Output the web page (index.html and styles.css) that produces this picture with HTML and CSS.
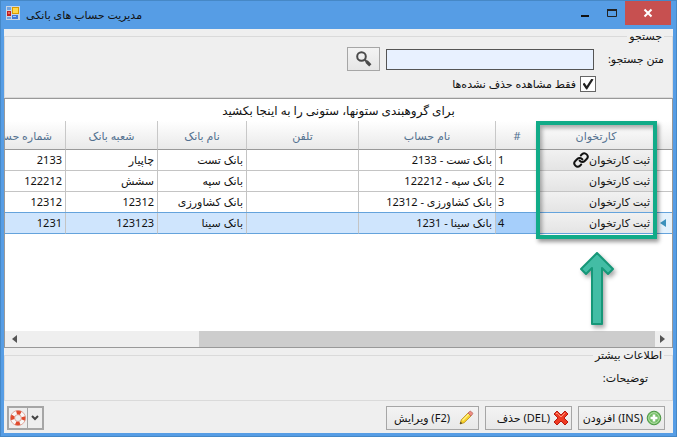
FILE: index.html
```html
<!DOCTYPE html>
<html lang="fa">
<head>
<meta charset="utf-8">
<title>مدیریت حساب های بانکی</title>
<link rel="stylesheet" href="styles.css">
</head>
<body>
<div class="window">
  <header class="titlebar">
    <svg class="app-icon" width="14" height="14" viewBox="0 0 14 14" aria-hidden="true">
      <rect width="14" height="14" fill="#c9d6e6"/>
      <rect x="1" y="1" width="4" height="3" fill="#6fa3e0"/>
      <rect x="1" y="5" width="4" height="5" fill="#c21f1f"/>
      <rect x="2" y="6" width="2" height="2" fill="#e86a5a"/>
      <rect x="1" y="11" width="4" height="2" fill="#6fa3e0"/>
      <rect x="6" y="1" width="7" height="7" fill="#d99a00"/>
      <rect x="7" y="2" width="5" height="5" fill="#ffd84a"/>
      <rect x="6" y="9" width="6" height="4" fill="#3f78d8"/>
      <rect x="7" y="10" width="3" height="1" fill="#a9c8f5"/>
    </svg>
    <h1 class="title">مدیریت حساب های بانکی</h1>
    <div class="window-buttons">
      <button class="win-btn" type="button" aria-label="کوچک کردن"><svg width="10" height="10" viewBox="0 0 10 10"><path d="M1 8h8" stroke="#111" stroke-width="2"/></svg></button>
      <button class="win-btn" type="button" aria-label="بزرگ کردن"><svg width="10" height="10" viewBox="0 0 10 10"><path d="M.5 1.500v7h9v-7z" fill="none" stroke="#222"/><path d="M0 2h10" stroke="#222" stroke-width="2"/></svg></button>
      <button class="win-btn close" type="button" aria-label="بستن"><svg width="10" height="10" viewBox="0 0 10 10"><path d="M1.500 1.500l7 7M8.500 1.500l-7 7" stroke="#fff" stroke-width="2"/></svg></button>
    </div>
  </header>

  <main class="form" dir="rtl">
    <fieldset class="group search">
      <legend>جستجو</legend>
      <div class="search-row">
        <label class="search-label" for="q">متن جستجو:</label>
        <input class="search-input" id="q" type="text">
        <button class="search-btn" type="button" aria-label="جستجو">
          <svg width="16" height="16" viewBox="0 0 16 16"><circle cx="5.500" cy="5.500" r="4.300" fill="none" stroke="#4a4a4a" stroke-width="2"/><path d="M8.800 8.800l2 2" stroke="#4a4a4a" stroke-width="2"/><path d="M10.500 10.500l3.800 3.800" stroke="#4a4a4a" stroke-width="3.200"/></svg>
        </button>
      </div>
      <div class="check-row">
        <input class="check" id="active" type="checkbox" checked>
        <label for="active">فقط مشاهده حذف نشده‌ها</label>
      </div>
    </fieldset>

    <section class="grid">
      <p class="group-hint">برای گروهبندی ستونها، ستونی را به اینجا بکشید</p>
      <table class="accounts">
        <colgroup><col class="c-mark"><col class="c-reader"><col class="c-num"><col class="c-name"><col class="c-phone"><col class="c-bank"><col class="c-branch"><col class="c-account"></colgroup>
        <thead>
          <tr><th></th><th>کارتخوان</th><th>#</th><th>نام حساب</th><th>تلفن</th><th>نام بانک</th><th>شعبه بانک</th><th>شماره حساب</th></tr>
        </thead>
        <tbody>
          <tr><td></td><td class="action"><button type="button">ثبت کارتخوان
            <svg width="16" height="16" viewBox="0 0 24 24" fill="none" stroke="#111" stroke-width="3" stroke-linecap="round" stroke-linejoin="round" aria-hidden="true"><path d="M10 13a5 5 0 0 0 7.540.54l3-3a5 5 0 0 0-7.070-7.070l-1.720 1.710"/><path d="M14 11a5 5 0 0 0-7.540-.54l-3 3a5 5 0 0 0 7.070 7.070l1.710-1.710"/></svg></button></td><td class="num">1</td><td>بانک تست - 2133</td><td></td><td>بانک تست</td><td>چاپیار</td><td>2133</td></tr>
          <tr><td></td><td class="action"><button type="button">ثبت کارتخوان</button></td><td class="num">2</td><td>بانک سپه - 122212</td><td></td><td>بانک سپه</td><td>سشش</td><td>122212</td></tr>
          <tr><td></td><td class="action"><button type="button">ثبت کارتخوان</button></td><td class="num">3</td><td>بانک کشاورزی - 12312</td><td></td><td>بانک کشاورزی</td><td>12312</td><td>12312</td></tr>
          <tr class="selected"><td class="marker"><svg width="6" height="8" viewBox="0 0 6 8" aria-hidden="true"><path d="M6 0v8L0 4z" fill="#3c92bd"/></svg></td><td class="action"><button type="button">ثبت کارتخوان</button></td><td class="num current">4</td><td>بانک سینا - 1231</td><td></td><td>بانک سینا</td><td>123123</td><td>1231</td></tr>
        </tbody>
      </table>
      <div class="scrollbar">
        <svg width="5" height="8" viewBox="0 0 5 8" aria-hidden="true"><path d="M0 0v8l5-4z" fill="#555"/></svg>
        <div class="track"><div class="thumb"></div></div>
        <svg width="5" height="8" viewBox="0 0 5 8" aria-hidden="true"><path d="M5 0v8L0 4z" fill="#555"/></svg>
      </div>
      <div class="highlight"></div>
      <svg class="arrow" width="36" height="76" viewBox="0 0 36 76" aria-hidden="true"><path d="M18 2L34 18l-5 5-6-6v56h-10V17l-6 6-5-5z" fill="#43bda5" stroke="#169778" stroke-width="2" stroke-linejoin="round"/></svg>
    </section>

    <fieldset class="group details">
      <legend>اطلاعات بیشتر</legend>
      <p>توضیحات:</p>
    </fieldset>

    <footer class="actions">
      <button class="cmd" type="button">
        <svg width="16" height="16" viewBox="0 0 16 16" aria-hidden="true"><circle cx="8" cy="8" r="6.800" fill="#73bd65" stroke="#4c9744"/><circle cx="8" cy="8" r="5.300" fill="none" stroke="#b5dfaa"/><path d="M8 4.500v7M4.500 8h7" stroke="#fff" stroke-width="2.600"/></svg>
        <span>(INS) افزودن</span>
      </button>
      <button class="cmd" type="button">
        <svg width="16" height="16" viewBox="0 0 16 16" aria-hidden="true"><path d="M4 1L8 5l4-4 3 3-4 4 4 4-3 3-4-4-4 4-3-3 4-4-4-4z" fill="#ee3a22" stroke="#b81a10" stroke-linejoin="round"/><path d="M3 4l1-1.200L8 7l4-4.200" fill="none" stroke="#ff9a80"/></svg>
        <span>(DEL) حذف</span>
      </button>
      <button class="cmd wide" type="button">
        <svg width="16" height="16" viewBox="0 0 16 16" aria-hidden="true"><path d="M2 14l1.300-4.200L10 3l3 3-6.800 6.700z" fill="#f7d32c" stroke="#b98a18" stroke-width=".8"/><path d="M4.500 10.500L11 4" stroke="#fff08a" stroke-width="1.200"/><path d="M10 3l1.600-1.500q.8-.6 1.600.1l1.200 1.200q.7.800 0 1.500L13 6z" fill="#ef8d82" stroke="#b8645c" stroke-width=".8"/><path d="M2 14l.7-2.200 1.500 1.500z" fill="#333"/></svg>
        <span>(F2) ویرایش</span>
      </button>
      <div class="help" dir="ltr">
        <button type="button" aria-label="راهنما"><svg width="16" height="16" viewBox="0 0 16 16"><circle cx="8" cy="8" r="5.500" fill="none" stroke="#f8f8f8" stroke-width="4"/><circle cx="8" cy="8" r="5.500" fill="none" stroke="#e24a2c" stroke-width="4" stroke-dasharray="4.320 4.320" stroke-dashoffset="2.160"/><circle cx="8" cy="8" r="7.500" fill="none" stroke="#d98a7a" stroke-width=".7"/><circle cx="8" cy="8" r="3.400" fill="none" stroke="#d98a7a" stroke-width=".7"/></svg></button>
        <button type="button" aria-label="گزینه‌ها"><svg width="8" height="6" viewBox="0 0 8 6"><path d="M1 1l3 3 3-3" fill="none" stroke="#444" stroke-width="2"/></svg></button>
      </div>
    </footer>
  </main>
</div>
</body>
</html>
```

FILE: styles.css
```css
* { box-sizing: border-box; }

body {
  margin: 0;
  font: 11px/14px "Noto Sans", "DejaVu Sans", sans-serif;
  color: #111;
}

button, input { font: inherit; color: inherit; margin: 0; padding: 0; }
p { margin: 0; }
svg { display: block; flex: none; }

.window {
  display: flex;
  flex-direction: column;
  min-height: 100vh;
  padding: 0 3px 3px;
  border: 1px solid #4688c6;
  background: #569de5;
}

.titlebar {
  display: flex;
  align-items: center;
  height: 28px;
  padding-left: 2px;
}
.app-icon { margin-bottom: 4px; }
.title {
  flex: 1;
  margin: 0 6px;
  font-size: 11px;
  font-weight: 400;
}
.window-buttons { display: flex; align-self: flex-start; margin-right: 2px; }
.win-btn {
  display: flex;
  align-items: center;
  justify-content: center;
  width: 27px;
  height: 24px;
  border: 0;
  background: none;
}
.win-btn.close { width: 46px; background: #c75050; }

.form {
  flex: 1;
  display: flex;
  flex-direction: column;
  background: #efefef;
}

.group {
  min-width: 0;
  margin: 0;
  padding: 4px 8px 5px;
  border: 1px solid #dadada;
}
.group legend { margin: 0; padding: 0 2px; }

.search-row, .check-row { display: flex; align-items: center; }
.search-label { width: 70px; }
.search-input {
  width: 208px;
  height: 21px;
  border: 1px solid #555;
  background: #e8f1ff;
}
.search-btn {
  display: flex;
  align-items: center;
  justify-content: center;
  width: 33px;
  height: 24px;
  margin-right: 6px;
  border: 1px solid #a6a6a6;
  background: linear-gradient(#f3f3f3, #e6e6e6);
}
.check-row { gap: 4px; margin-top: 5px; padding-right: 68px; }
.check {
  appearance: none;
  width: 16px;
  height: 16px;
  border: 1px solid #666;
  background: #fff;
  display: grid;
  place-items: center;
}
.check:checked::before {
  content: "";
  width: 11px;
  height: 11px;
  background: #222;
  clip-path: polygon(0 50%, 18% 38%, 38% 68%, 82% 0, 100% 8%, 42% 100%, 34% 100%);
}

.grid {
  position: relative;
  flex: 1;
  display: flex;
  flex-direction: column;
  overflow: hidden;
  border: 1px solid #999;
  background: #fff;
}
.group-hint { padding: 5px 0 3px; font-size: 12px; text-align: center; }

.accounts {
  width: 697px;
  flex: none;
  table-layout: fixed;
  border-collapse: separate;
  border-spacing: 0;
}
.c-mark { width: 19px; }
.c-reader { width: 115px; }
.c-num { width: 43px; }
.c-name { width: 137px; }
.c-phone { width: 112px; }
.c-bank { width: 89px; }
.c-branch { width: 92px; }
.c-account { width: 90px; }

.accounts th {
  height: 29px;
  padding: 2px 0 0;
  border-left: 1px solid #c8c8c8;
  border-bottom: 1px solid #999;
  background: linear-gradient(#fff, #e9e9e9);
  color: #52708f;
  font-weight: 400;
  white-space: nowrap;
}
.accounts td {
  height: 21px;
  padding: 0 3px;
  border-left: 1px solid #c4c4c4;
  border-bottom: 1px solid #c4c4c4;
  text-align: right;
  white-space: nowrap;
}
.accounts .num { padding: 0 2px; text-align: left; }
.accounts .action { padding: 0; }
.action button {
  display: flex;
  align-items: center;
  width: 100%;
  height: 20px;
  padding: 0 3px;
  border: 0;
  background: linear-gradient(#f1f1f1, #e4e4e4);
}
.selected td {
  background: #cfe5fd;
  border-bottom-color: #64a3dc;
  box-shadow: 0 -1px #64a3dc;
}
.selected .current { background: #a6cffb; }
.accounts .marker { padding: 0 6px; background: #e4f2fd; }

.scrollbar {
  display: flex;
  align-items: center;
  height: 16px;
  margin-top: auto;
  padding: 0 7px;
  background: #efefef;
}
.track { flex: 1; height: 16px; margin: 0 5px; }
.thumb { width: 72%; height: 16px; background: #cdcdcd; }

.highlight {
  position: absolute;
  top: 22px;
  right: 15px;
  width: 121px;
  height: 118px;
  border: 4px solid #11ab88;
  box-shadow: 2px 3px 4px #0006, inset 2px 3px 4px #0005;
}
.arrow {
  position: absolute;
  top: 152px;
  right: 57px;
  filter: drop-shadow(2px 3px 2px #0005);
}

.details p { padding: 5px 16px 10px; }

.actions { display: flex; gap: 6px; padding: 5px 8px 3px 3px; }
.cmd {
  display: flex;
  align-items: center;
  gap: 3px;
  width: 87px;
  height: 24px;
  padding: 0 2px;
  border: 1px solid #a6a6a6;
  background: linear-gradient(#f3f3f3, #e8e8e8);
  white-space: nowrap;
}
.cmd.wide { width: 93px; gap: 8px; padding-right: 4px; }

.help { display: flex; margin-right: auto; border: 1px solid #a6a6a6; }
.help button {
  display: flex;
  align-items: center;
  justify-content: center;
  width: 20px;
  height: 22px;
  border: 1px solid #a6a6a6;
  background: #eee;
}
.help button + button { width: 15px; border-left: 0; }
```
